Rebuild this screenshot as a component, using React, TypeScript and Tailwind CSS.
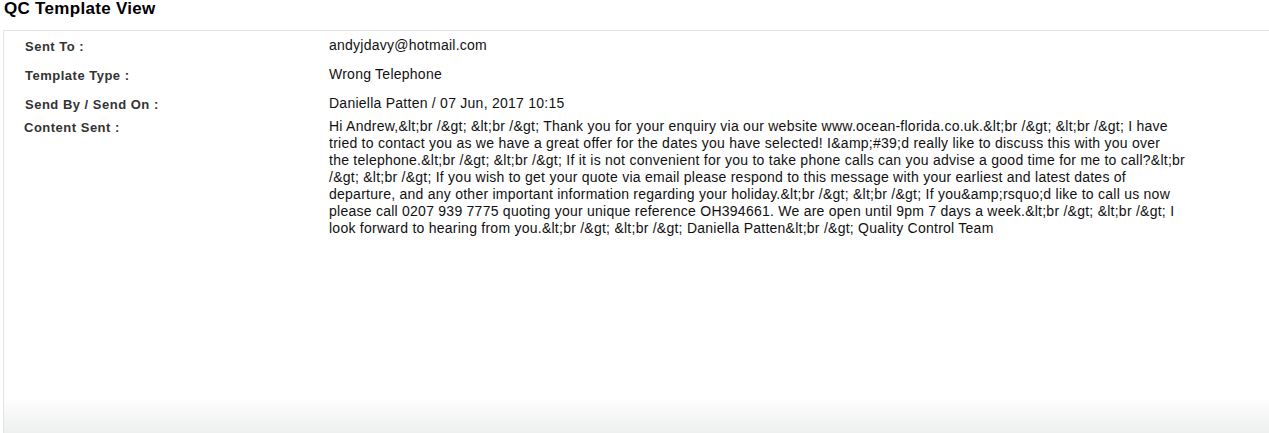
import React from 'react';

const rows = [
  { label: 'Sent To :', value: 'andyjdavy@hotmail.com' },
  { label: 'Template Type :', value: 'Wrong Telephone' },
  { label: 'Send By / Send On :', value: 'Daniella Patten / 07 Jun, 2017 10:15' },
];

// wrapped the same way as the original message body
const contentLines = [
  'Hi Andrew,&lt;br /&gt; &lt;br /&gt; Thank you for your enquiry via our website www.ocean-florida.co.uk.&lt;br /&gt; &lt;br /&gt; I have',
  'tried to contact you as we have a great offer for the dates you have selected! I&amp;#39;d really like to discuss this with you over',
  'the telephone.&lt;br /&gt; &lt;br /&gt; If it is not convenient for you to take phone calls can you advise a good time for me to call?&lt;br',
  '/&gt; &lt;br /&gt; If you wish to get your quote via email please respond to this message with your earliest and latest dates of',
  'departure, and any other important information regarding your holiday.&lt;br /&gt; &lt;br /&gt; If you&amp;rsquo;d like to call us now',
  'please call 0207 939 7775 quoting your unique reference OH394661. We are open until 9pm 7 days a week.&lt;br /&gt; &lt;br /&gt; I',
  'look forward to hearing from you.&lt;br /&gt; &lt;br /&gt; Daniella Patten&lt;br /&gt; Quality Control Team',
];

export default function App() {
  return (
    <div className="w-[1269px] h-[433px] bg-white overflow-hidden font-['Liberation_Sans',Arial,sans-serif] flex flex-col">
      <h1 className="px-[4px] h-[30px] text-[17px] leading-[18px] font-bold text-black tracking-[0.3px]">
        QC Template View
      </h1>

      {/* panel */}
      <div className="ml-[3px] flex-1 border-t border-l border-[#e3e3e3] bg-gradient-to-b from-white from-[91%] to-[#eeefef] pt-[6px]">
        {rows.map((r) => (
          <div key={r.label} className="flex h-[29px]">
            <div className="w-[325px] pl-[21px] pt-[1px] text-[13px] leading-[17px] font-bold text-[#333] tracking-[0.5px]">
              {r.label}
            </div>
            <div className="text-[14px] leading-[17px] text-[#111] tracking-[0.25px]">{r.value}</div>
          </div>
        ))}
        <div className="flex -mt-[6px]">
          <div className="w-[325px] pl-[20px] pt-[1px] text-[13px] leading-[17px] font-bold text-[#333] tracking-[0.5px]">
            Content Sent :
          </div>
          <div className="w-[870px] text-[14px] leading-[17px] text-[#111] tracking-[0.25px]">
            {contentLines.map((line, i) => (
              <div key={i} className="whitespace-nowrap">
                {line}
              </div>
            ))}
          </div>
        </div>
      </div>
    </div>
  );
}
